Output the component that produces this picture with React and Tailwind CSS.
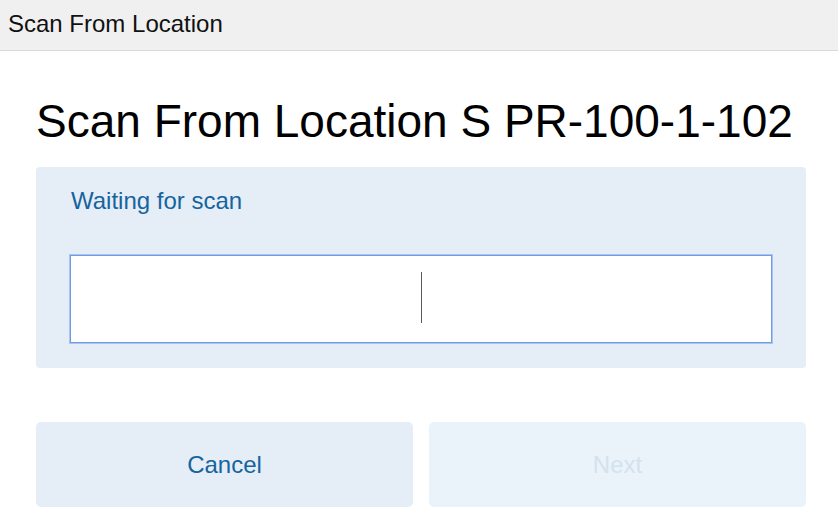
import React from 'react';

// Scan step screen: header bar, location title, waiting panel with input, actions
function ScanPanel() {
  return (
    <div className="rounded-[4px] bg-[#e5eef6] px-[34px] pt-[22px] pb-[25px]">
      <div className="pl-[1px] text-[24px] leading-none text-[#16649f]">Waiting for scan</div>
      <div className="mt-[42px] flex h-[88px] items-center justify-center border border-[#6f9ce2] bg-white shadow-[0_0_0_1px_#a9c5f0]">
        <span className="mb-[3px] block h-[51px] w-px bg-[#5a5a5a]" />
      </div>
    </div>
  );
}

export default function App() {
  return (
    <div className="min-h-screen bg-white font-['Liberation_Sans',Arial,sans-serif]">
      <div className="flex h-[51px] items-center border-b border-[#d9d9d9] bg-[#f0f0f0] px-[8px] pb-[3px] text-[24px] text-[#111]">
        Scan From Location
      </div>

      <div className="pl-[36px] pr-[32px]">
        <h1 className="mt-[47px] text-[46px] leading-none text-black">Scan From Location S PR-100-1-102</h1>

        <div className="mt-[23px]">
          <ScanPanel />
        </div>

        <div className="mt-[54px] grid grid-cols-2 gap-[16px]">
          <button className="flex h-[85px] items-center justify-center rounded-[5px] bg-[#e5eef6] text-[24px] text-[#16649f]">
            Cancel
          </button>
          <button disabled className="flex h-[85px] items-center justify-center rounded-[5px] bg-[#ebf3fa] text-[24px] text-[#d3e2ed]">
            Next
          </button>
        </div>
      </div>
    </div>
  );
}
